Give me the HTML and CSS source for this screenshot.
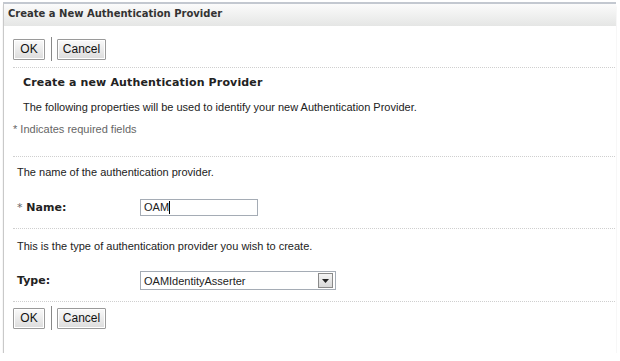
FILE: index.html
```html
<!DOCTYPE html>
<html>
<head>
<meta charset="utf-8">
<link rel="stylesheet" href="styles.css">
</head>
<body>
<div class="panel">
  <div class="header">Create a New Authentication Provider</div>
  <div class="content">
    <div class="btnbar">
      <button class="btn btn-ok">OK</button>
      <span class="sep"></span>
      <button class="btn btn-cancel">Cancel</button>
    </div>
    <div class="rule"></div>
    <div class="intro">
      <div class="subtitle">Create a new Authentication Provider</div>
      <div class="desc">The following properties will be used to identify your new Authentication Provider.</div>
    </div>
    <div class="required"><span class="star">*</span> Indicates required fields</div>
    <div class="rule"></div>
    <div class="section">
      <div class="help">The name of the authentication provider.</div>
      <div class="field">
        <label class="label"><span class="star">*</span> Name:</label>
        <div class="textbox">OAM<span class="caret"></span></div>
      </div>
    </div>
    <div class="rule"></div>
    <div class="section section-type">
      <div class="help">This is the type of authentication provider you wish to create.</div>
      <div class="field field-type">
        <label class="label">Type:</label>
        <div class="select">
          <span class="select-text">OAMIdentityAsserter</span>
          <span class="select-btn"><svg width="7" height="4" viewBox="0 0 7 4"><path d="M0 0H7L3.5 4Z" fill="#222"/></svg></span>
        </div>
      </div>
    </div>
    <div class="rule"></div>
    <div class="btnbar btnbar-bottom">
      <button class="btn btn-ok">OK</button>
      <span class="sep"></span>
      <button class="btn btn-cancel">Cancel</button>
    </div>
  </div>
</div>
</body>
</html>
```
FILE: styles.css
```css
html, body {
  margin: 0;
  padding: 0;
  background: #ffffff;
}
body {
  font-family: "Liberation Sans", Arial, sans-serif;
  font-size: 11px;
  color: #222;
}
.panel {
  margin: 2px 4px 0 3px;
  height: 351px;
  border-left: 1px solid #c9c9c9;
  border-top: 2px solid #c3c8d0;
  box-shadow: 0 3px 2px -1px #8a8a8a;
  box-sizing: border-box;
  background: #fff;
}
.header {
  height: 22px;
  line-height: 20px;
  padding-left: 4px;
  font-family: "DejaVu Sans", sans-serif;
  font-weight: bold;
  font-size: 10px;
  color: #333;
  background: linear-gradient(#fbfbfb, #e5e6e5);
}
.content {
  padding: 11px 1px 0 9px;
}
.btnbar {
  display: flex;
  align-items: center;
  height: 24px;
}
.btn {
  font-family: "Liberation Sans", Arial, sans-serif;
  font-size: 12px;
  color: #111;
  height: 21px;
  padding: 0;
  border: 1px solid #9a9a9a;
  border-radius: 1px;
  background: linear-gradient(#fafafa, #dcdcdc);
  box-shadow: inset 0 0 0 1px #fff;
}
.btn-ok { width: 32px; }
.btn-cancel { width: 49px; }
.sep {
  width: 1px;
  height: 24px;
  background: #888;
  margin: 0 5px 0 6px;
}
.rule {
  height: 0;
  border-top: 1px dotted #cfcfcf;
  margin-top: 6px;
}
.intro {
  padding: 8px 0 0 10px;
}
.subtitle {
  font-family: "DejaVu Sans", sans-serif;
  font-weight: bold;
  font-size: 11px;
  letter-spacing: 0.15px;
  color: #222;
  height: 14px;
}
.desc {
  margin-top: 11px;
  color: #222;
}
.required {
  margin-top: 10px;
  color: #666;
  height: 27px;
}
.star { color: #666; }
.section {
  padding: 9px 0 5px 4px;
}
.section-type {
  padding-top: 11px;
}
.help {
  color: #222;
  height: 14px;
}
.field {
  display: flex;
  align-items: center;
  margin-top: 18px;
  height: 19px;
}
.field-type {
  margin-top: 17px;
}
.label {
  width: 123px;
  font-family: "DejaVu Sans", sans-serif;
  font-weight: bold;
  font-size: 11px;
  color: #222;
}
.label .star { font-weight: normal; }
.textbox {
  width: 113px;
  height: 15px;
  border: 1px solid #a5acb5;
  padding: 0 0 0 3px;
  line-height: 15px;
  font-size: 11px;
  display: flex;
  align-items: center;
}
.caret {
  display: inline-block;
  width: 1px;
  height: 13px;
  background: #000;
}
.select {
  width: 194px;
  height: 17px;
  border: 1px solid #a5acb5;
  display: flex;
  align-items: center;
  justify-content: space-between;
  box-sizing: content-box;
}
.select-text {
  padding-left: 3px;
  font-size: 11px;
}
.select-btn {
  width: 13px;
  height: 13px;
  margin-right: 2px;
  border: 1px solid #8a8a8a;
  background: linear-gradient(#f4f4f4, #d8d8d8);
  display: flex;
  align-items: center;
  justify-content: center;
}
.btnbar-bottom {
  margin-top: 4px;
}
```
